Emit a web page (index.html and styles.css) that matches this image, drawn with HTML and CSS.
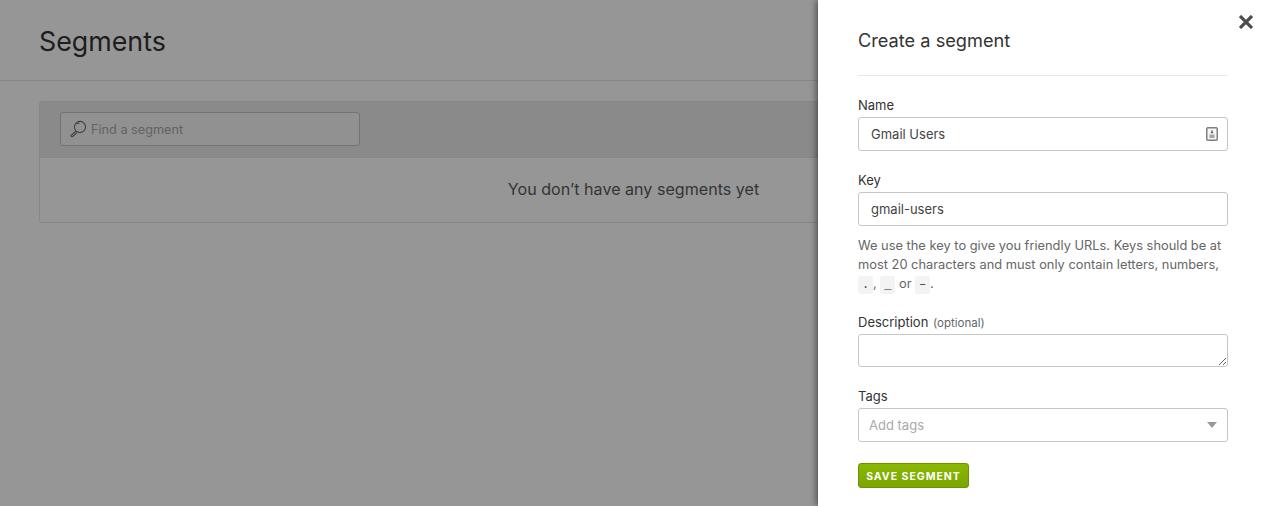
FILE: index.html
```html
<!DOCTYPE html>
<html>
<head>
<meta name="viewport" content="width=device-width, initial-scale=1.0">
<link rel="stylesheet" href="styles.css">
</head>
<body>

<!-- PAGE BEHIND THE DRAWER -->
<div class="page-head">
  <h1>Segments</h1>
</div>
<div class="page-body">
  <div class="card">
    <div class="card-bar">
      <div class="search">
        <svg class="search-icon" width="18" height="18" viewBox="0 0 18 18" fill="none" stroke="#6f6f6f" stroke-width="1.1">
          <circle cx="10" cy="7" r="5.6"/>
          <path d="M6.600 4.200a4.400 4.400 0 0 1 3-1.200"/>
          <path d="M6 11l-4.700 4.100a1.100 1.100 0 0 0 0 1.400 1.100 1.100 0 0 0 1.400 0L7.200 12.300"/>
        </svg>
        <span>Find a segment</span>
      </div>
    </div>
    <div class="card-empty">You don’t have any segments yet</div>
  </div>
</div>
<div class="backdrop"></div>

<!-- DRAWER -->
<div class="drawer">
  <svg class="close" width="14" height="14" viewBox="0 0 14 14" stroke="#4d4d4d" stroke-width="3.2">
    <path d="M1 1l12 12M13 1L1 13"/>
  </svg>
  <h2>Create a segment</h2>
  <form class="segment-form">
    <div class="field">
      <label>Name</label>
      <div class="box">
        <span>Gmail Users</span>
        <svg class="contact-icon" width="12" height="14" viewBox="0 0 12 14">
          <rect x="0.75" y="0.75" width="10.5" height="12.5" rx="1" fill="#f4f4f4" stroke="#808080" stroke-width="1.5"/>
          <path d="M6 2.500l1.400 3.700H4.600z" fill="#666"/>
          <rect x="3.500" y="7.500" width="5" height="3.500" fill="#a5a5a5"/>
        </svg>
      </div>
    </div>
    <div class="field">
      <label>Key</label>
      <div class="box"><span>gmail-users</span></div>
      <p class="help">We use the key to give you friendly URLs. Keys should be at most 20 characters and must only contain letters, numbers, <code>.</code>, <code>_</code> or <code>–</code>.</p>
    </div>
    <div class="field">
      <label>Description <small>(optional)</small></label>
      <textarea class="area"></textarea>
    </div>
    <div class="field">
      <label>Tags</label>
      <div class="box">
        <span class="placeholder">Add tags</span>
        <i class="caret"></i>
      </div>
    </div>
    <button type="button" class="save">SAVE SEGMENT</button>
  </form>
</div>

</body>
</html>
```

FILE: styles.css
```css
* {
  box-sizing: border-box;
}

html, body {
  height: 100%;
}

body {
  margin: 0;
  overflow: hidden;
  position: relative;
  background: #fff;
  color: #333;
  font-family: Inter, "Liberation Sans", sans-serif;
  font-size: 13px;
}

.page-head {
  height: 81px;
  padding: 1px 39px 0;
  display: flex;
  align-items: center;
  border-bottom: 1px solid #e4e4e4;
}

h1 {
  margin: 0;
  font-size: 26.8px;
  font-weight: 400;
  color: #333;
}

.page-body {
  padding: 20px 39px;
}

.card {
  border: 1px solid #e4e4e4;
  border-radius: 3px;
  height: 122px;
}

.card-bar {
  height: 56px;
  padding: 10px 20px;
  background: #ebebeb;
  border-bottom: 1px solid #e4e4e4;
}

.search {
  width: 300px;
  height: 34px;
  padding: 0 9px;
  display: flex;
  align-items: center;
  gap: 3px;
  font-size: 12.7px;
  color: #a9a9a9;
  background: #f7f7f7;
  border: 1px solid #c6c6c6;
  border-radius: 3px;
}

.card-empty {
  padding-top: 21px;
  text-align: center;
  font-size: 16.1px;
  color: #5a5a5a;
}

.backdrop {
  position: absolute;
  inset: 0;
  background: rgba(0, 0, 0, 0.41);
}

/* Drawer */
.drawer {
  position: absolute;
  top: 0;
  right: 0;
  bottom: 0;
  width: 449px;
  padding: 0 39px 0 40px;
  background: #fff;
  box-shadow: -2px 0 6px rgba(0, 0, 0, 0.45);
}

.close {
  position: absolute;
  top: 15px;
  right: 14px;
}

h2 {
  margin: 0;
  height: 76px;
  padding-top: 28px;
  font-size: 18.2px;
  line-height: 24px;
  font-weight: 400;
  color: #333;
  border-bottom: 1px solid #e8e8e8;
}

.segment-form {
  padding-top: 21px;
}

.field {
  margin-bottom: 21px;
}

label {
  display: block;
  height: 20px;
  line-height: 16px;
  color: #333;
}

small {
  font-size: 11.5px;
  color: #666;
  margin-left: 1px;
}

.box {
  height: 34px;
  padding: 0 12px;
  display: flex;
  align-items: center;
  justify-content: space-between;
  border: 1px solid #c6c6c6;
  border-radius: 3px;
  color: #444;
}

.area {
  display: block;
  width: 100%;
  height: 33px;
  border: 1px solid #c6c6c6;
  border-radius: 3px;
}

.contact-icon {
  margin-right: -3px;
}

.placeholder {
  margin-left: -2px;
  color: #a9a9a9;
}

.caret {
  margin-right: -2px;
  border-left: 5.5px solid transparent;
  border-right: 5.5px solid transparent;
  border-top: 6px solid #999;
}

.help {
  margin: 10px 0 -1px;
  font-size: 12.85px;
  line-height: 19px;
  color: #666;
}

code {
  display: inline-block;
  width: 15px;
  height: 18px;
  line-height: 18px;
  text-align: center;
  font-family: "Liberation Mono", monospace;
  font-size: 12px;
  color: #444;
  background: #f3f3f3;
  border-radius: 3px;
}

.save {
  display: block;
  width: 111px;
  height: 25px;
  padding: 1px 0 0;
  font-family: inherit;
  font-size: 10.5px;
  font-weight: 700;
  letter-spacing: 1px;
  color: #fff;
  background: linear-gradient(#8ab800, #7aa600);
  border: 1px solid #6c9400;
  border-radius: 3px;
}
```
